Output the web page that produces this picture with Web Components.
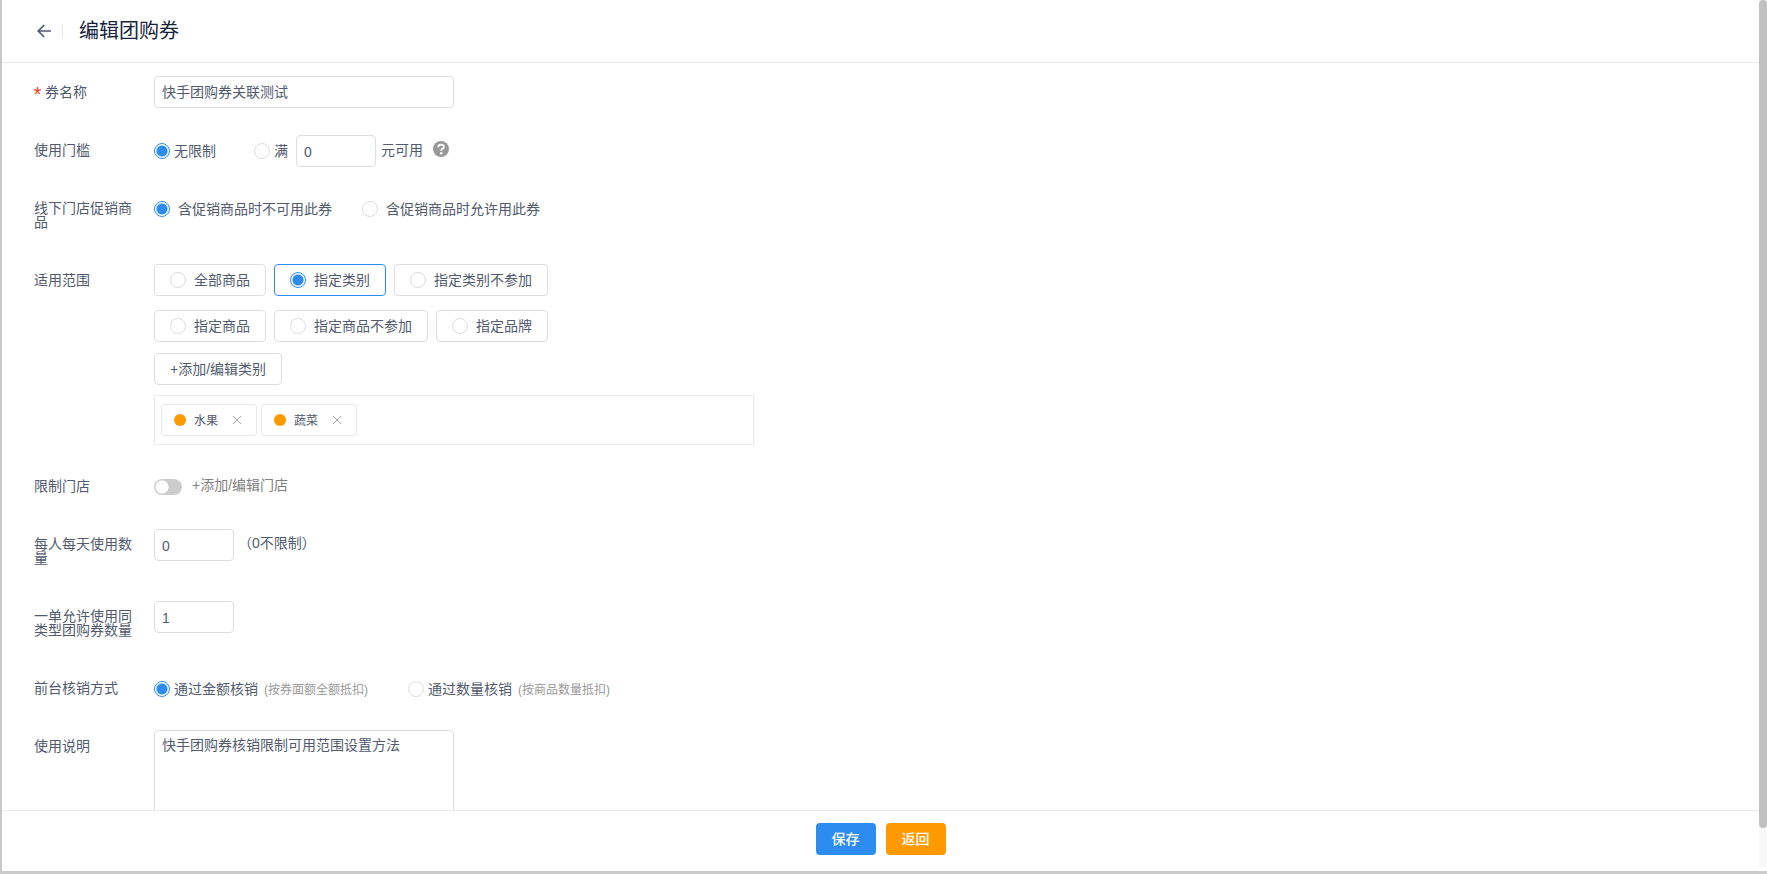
<!DOCTYPE html>
<html lang="zh-CN">
<head>
<meta charset="utf-8">
<meta name="viewport" content="width=device-width, initial-scale=1">
<title>编辑团购券</title>
<style>
  body { margin: 0; color: #515a6e; font: 14px/20px "Liberation Sans", "Noto Sans CJK SC", sans-serif; }
</style>
</head>
<body>
<page-shell>
  <page-header slot="header">编辑团购券</page-header>
  <coupon-form></coupon-form>
  <action-bar slot="footer"></action-bar>
</page-shell>

<template id="page-shell">
  <style>
    :host { display: grid; grid-template-columns: minmax(0, 1fr) 8px; height: 100vh; box-sizing: border-box; border-left: 2px solid #c8c8c8; border-bottom: 3px solid #cbcbcb; background: #fff; }
    .page { display: flex; flex-direction: column; min-height: 0; }
    main { flex: 1; min-height: 0; overflow: auto; scrollbar-width: none; }
    .track { display: flex; flex-direction: column; background: #f8f8f8; margin-bottom: 4px; }
    .thumb { flex: 0 0 95.5%; background: #c1c1c1; border-radius: 4px; }
  </style>
  <div class="page">
    <slot name="header"></slot>
    <main><slot></slot></main>
    <slot name="footer"></slot>
  </div>
  <div class="track" aria-hidden="true"><div class="thumb"></div></div>
</template>

<template id="page-header">
  <style>
    :host { display: flex; align-items: center; height: 62px; padding-left: 34px; border-bottom: 1px solid #e8eaec; }
    button { display: flex; padding: 0; border: 0; background: none; color: #515a6e; cursor: pointer; }
    svg { width: 16px; height: 16px; }
    .rule { width: 1px; height: 14px; margin: 0 16px 0 10px; background: #e8eaec; }
    h1 { margin: 0; font-size: 20px; line-height: 30px; font-weight: 400; color: #17233d; }
  </style>
  <button type="button" aria-label="返回上一页">
    <svg viewBox="0 0 16 16" fill="none" stroke="currentColor" stroke-width="1.7"><path d="M8.2 2 2.2 8l6 6M2.4 8H15"/></svg>
  </button>
  <span class="rule"></span>
  <h1><slot></slot></h1>
</template>

<template id="form-row">
  <style>
    :host { display: grid; grid-template-columns: 120px minmax(0, 1fr); align-items: start; margin-bottom: 24px; }
    .label { padding: 10px 12px 10px 0; line-height: 14px; }
    .content { display: flex; align-items: center; min-height: 34px; box-sizing: border-box; padding-top: 2px; }
    :host([block]) .content { flex-direction: column; align-items: flex-start; padding-top: 1px; }
    .star { display: inline-flex; justify-content: center; width: 7px; height: 14px; margin-right: 4px; vertical-align: top; color: #ed4014; font: 20px/24px "Liberation Mono", monospace; }
    :host(:not([required])) .star { display: none; }
  </style>
  <div class="label"><span class="star">*</span><slot name="label"></slot></div>
  <div class="content"><slot></slot></div>
</template>

<template id="radio-option">
  <style>
    :host { display: inline-flex; }
    label { display: flex; align-items: center; gap: 4px; cursor: pointer; }
    :host([wide]) label { gap: 8px; }
    input { appearance: none; flex: none; width: 16px; height: 16px; margin: 0; border: 1px solid #dcdee2; border-radius: 50%; background: #fff; }
    input:checked { border-color: #2d8cf0; background: radial-gradient(circle, #2d8cf0 5px, #fff 6px); }
    :host([boxed]) label { gap: 8px; height: 32px; box-sizing: border-box; padding: 0 15px; border: 1px solid #dcdee2; border-radius: 4px; }
    :host([boxed]) label:has(:checked) { border-color: #2d8cf0; }
    small { margin-left: 2px; padding-top: 2px; font-size: 12px; color: #999; }
    small:empty { display: none; }
  </style>
  <label><input type="radio"><span><slot></slot></span><small></small></label>
</template>

<template id="category-tag">
  <style>
    :host { display: flex; align-items: center; height: 32px; box-sizing: border-box; padding: 0 14px 0 12px; border: 1px solid #e8eaec; border-radius: 3px; font-size: 12px; }
    .dot { width: 12px; height: 12px; margin-right: 8px; border-radius: 50%; background: #f90; }
    .text { padding-top: 2px; }
    button { display: flex; margin: 0 0 0 14px; padding: 0; border: 0; background: none; color: #aaa; cursor: pointer; }
    svg { width: 10px; height: 10px; }
  </style>
  <span class="dot"></span><span class="text"><slot></slot></span>
  <button type="button" aria-label="移除"><svg viewBox="0 0 10 10" fill="none" stroke="currentColor"><path d="m1 1 8 8M9 1 1 9"/></svg></button>
</template>

<template id="toggle-switch">
  <style>
    :host { display: inline-flex; }
    input { appearance: none; width: 28px; height: 16px; margin: 0; border-radius: 8px; background: radial-gradient(circle at 8px 8px, #fff 6px, #ccc 7px); cursor: pointer; }
    input:checked { background: radial-gradient(circle at 20px 8px, #fff 6px, #2d8cf0 7px); }
  </style>
  <input type="checkbox" role="switch" aria-label="限制门店">
</template>

<template id="coupon-form">
  <style>
    :host { display: block; padding: 12px 32px 0; }
    input, textarea { box-sizing: border-box; margin: 0; padding: 4px 7px; border: 1px solid #dcdee2; border-radius: 4px; background: #fff; color: inherit; font: inherit; outline: none; }
    input { height: 32px; }
    input:focus, textarea:focus { border-color: #57a3f3; }
    .name, textarea { width: 300px; }
    .name { padding-bottom: 6px; }
    textarea { height: 120px; resize: none; }
    .num { width: 80px; padding-top: 6px; }
    .money { margin: 0 5px 0 8px; }
    .unit { padding-bottom: 2px; }
    .help { width: 16px; height: 16px; margin: 0 0 4px 10px; }
    .next { margin-left: 38px; }
    .method { margin-left: 40px; }
    .promo { margin-left: 30px; }
    .scope { display: flex; flex-wrap: wrap; gap: 14px 8px; max-width: 400px; }
    .add { height: 32px; margin: 11px 0 10px; padding: 0 15px; border: 1px solid #dcdee2; border-radius: 4px; background: #fff; color: inherit; font: inherit; cursor: pointer; }
    .tags { display: flex; align-items: center; gap: 4px; width: 100%; max-width: 600px; height: 50px; box-sizing: border-box; padding: 0 6px; border: 1px solid #e8eaec; }
    .store { margin-left: 10px; padding: 0 0 4px; border: 0; background: none; color: #808080; font: inherit; }
    .hint { margin-left: 4px; padding-bottom: 4px; }
  </style>
  <form-row required block><label slot="label" for="name">券名称</label>
    <input class="name" id="name" type="text" value="快手团购券关联测试"></form-row>
  <form-row><span slot="label">使用门槛</span>
    <radio-option name="limit" checked>无限制</radio-option>
    <radio-option class="next" name="limit">满</radio-option>
    <input class="num money" id="money" type="text" value="0"><label class="unit" for="money">元可用</label>
    <svg class="help" viewBox="0 0 16 16" role="img" aria-label="帮助"><circle cx="8" cy="8" r="8" fill="#999"/><path d="M5.2 6.3c0-1.7 1.1-2.7 2.8-2.7s2.8.9 2.8 2.3c0 1.9-2.6 2-2.6 3.9" fill="none" stroke="#fff" stroke-width="1.9"/><circle cx="8.2" cy="12.2" r="1.2" fill="#fff"/></svg></form-row>
  <form-row><span slot="label">线下门店促销商品</span>
    <radio-option wide name="promo" checked>含促销商品时不可用此券</radio-option>
    <radio-option wide class="promo" name="promo">含促销商品时允许用此券</radio-option></form-row>
  <form-row block><span slot="label">适用范围</span>
    <div class="scope" role="radiogroup" aria-label="适用范围">
      <radio-option boxed name="scope">全部商品</radio-option>
      <radio-option boxed name="scope" checked>指定类别</radio-option>
      <radio-option boxed name="scope">指定类别不参加</radio-option>
      <radio-option boxed name="scope">指定商品</radio-option>
      <radio-option boxed name="scope">指定商品不参加</radio-option>
      <radio-option boxed name="scope">指定品牌</radio-option>
    </div>
    <button class="add" type="button">+添加/编辑类别</button>
    <div class="tags"><category-tag>水果</category-tag><category-tag>蔬菜</category-tag></div></form-row>
  <form-row><span slot="label">限制门店</span>
    <toggle-switch></toggle-switch><button class="store" type="button">+添加/编辑门店</button></form-row>
  <form-row><label slot="label" for="daily">每人每天使用数量</label>
    <input class="num" id="daily" type="text" value="0"><span class="hint">（0不限制）</span></form-row>
  <form-row><label slot="label" for="per-order">一单允许使用同类型团购券数量</label>
    <input class="num" id="per-order" type="text" value="1"></form-row>
  <form-row><span slot="label">前台核销方式</span>
    <radio-option name="method" note="(按券面额全额抵扣)" checked>通过金额核销</radio-option>
    <radio-option class="method" name="method" note="(按商品数量抵扣)">通过数量核销</radio-option></form-row>
  <form-row block><label slot="label" for="notes">使用说明</label>
    <textarea id="notes">快手团购券核销限制可用范围设置方法</textarea></form-row>
</template>

<template id="action-bar">
  <style>
    :host { display: flex; justify-content: center; gap: 10px; height: 61px; box-sizing: border-box; padding-top: 12px; border-top: 1px solid #e8eaec; }
    button { width: 60px; height: 32px; padding: 0; border: 0; border-radius: 4px; color: #fff; font: inherit; font-weight: 500; cursor: pointer; }
    .save { background: #2d8cf0; }
    .back { background: #f90; }
  </style>
  <button class="save" type="button">保存</button>
  <button class="back" type="button">返回</button>
</template>

<script>
  class TemplateElement extends HTMLElement {
    constructor() {
      super();
      const template = document.getElementById(this.localName);
      this.attachShadow({ mode: 'open' }).append(template.content.cloneNode(true));
    }
  }

  class RadioOption extends TemplateElement {
    connectedCallback() {
      this.input = this.shadowRoot.querySelector('input');
      this.input.name = this.getAttribute('name');
      this.input.checked = this.hasAttribute('checked');
      this.shadowRoot.querySelector('small').textContent = this.getAttribute('note') || '';
      // Each radio lives in its own root, so the group is kept exclusive here.
      this.input.addEventListener('change', () => {
        for (const other of this.getRootNode().querySelectorAll(`radio-option[name="${this.input.name}"]`)) {
          if (other !== this) other.input.checked = false;
        }
      });
    }
  }

  class CategoryTag extends TemplateElement {
    connectedCallback() {
      this.shadowRoot.querySelector('button').addEventListener('click', () => this.remove());
    }
  }

  customElements.define('radio-option', RadioOption);
  customElements.define('category-tag', CategoryTag);
  for (const name of ['page-header', 'form-row', 'toggle-switch', 'coupon-form', 'action-bar', 'page-shell']) {
    customElements.define(name, class extends TemplateElement {});
  }
</script>
</body>
</html>
